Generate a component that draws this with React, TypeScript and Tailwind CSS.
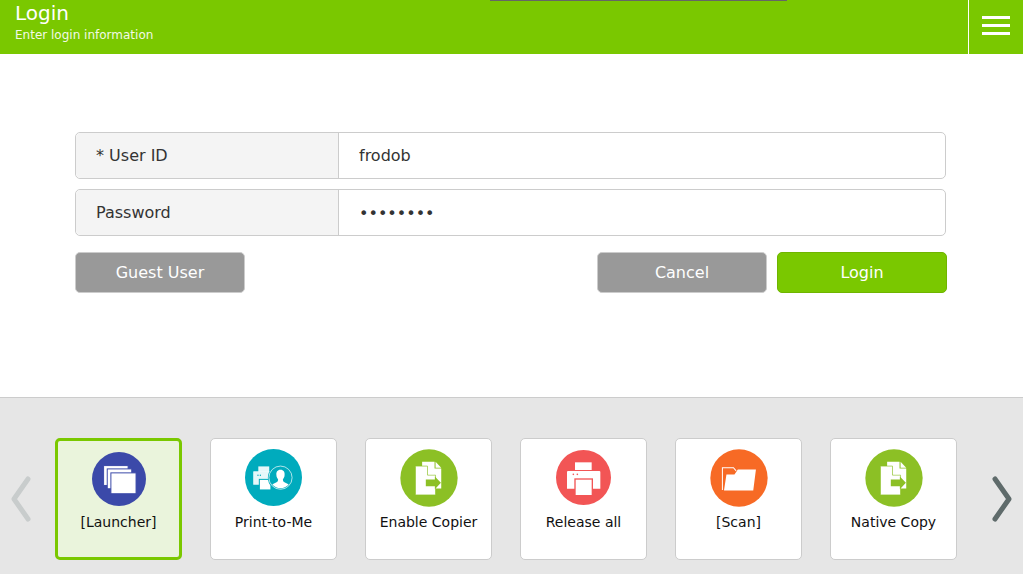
import React from "react";

const Launcher = () => (
  <svg viewBox="19 20 163 163" className="w-[54px] h-[54px]">
    <circle cx="100.5" cy="101.5" r="81.5" fill="#3b49a9" />
    <rect x="54" y="61" width="74" height="60" fill="#fff" stroke="#3b49a9" strokeWidth="3" />
    <rect x="65" y="71" width="74" height="60" fill="#fff" stroke="#3b49a9" strokeWidth="3" />
    <rect x="76" y="83" width="76" height="63" fill="#fff" stroke="#3b49a9" strokeWidth="3" />
  </svg>
);

const PrintToMe = () => (
  <svg viewBox="18 13 167 167" className="w-[57px] h-[57px]">
    <circle cx="101.5" cy="96.5" r="83.5" fill="#00abbd" />
    <rect x="57" y="64" width="32" height="16" fill="#fff" opacity="0.9" />
    <rect x="42" y="78" width="50" height="40" rx="2" fill="#fff" opacity="0.9" />
    <rect x="60" y="102" width="34" height="31" fill="#fff" stroke="#00abbd" strokeWidth="3" />
    <circle cx="56" cy="90" r="2" fill="#00abbd" />
    <circle cx="63" cy="90" r="2" fill="#00abbd" />
    <circle cx="122" cy="97" r="37" fill="#00abbd" />
    <circle cx="122" cy="97" r="34" fill="none" stroke="#fff" strokeWidth="2" />
    <path d="M122 74c-9 0-13 7-12 15 0 6 3 10 5 13 0 5-2 7-6 9-4 2-8 3-11 6 6 7 15 11 24 11s18-4 24-11c-3-3-7-4-11-6-4-2-6-4-6-9 2-3 5-7 5-13 1-8-3-15-12-15z" fill="#fff" />
  </svg>
);

const Copier = () => (
  <svg viewBox="15 12 171 173" className="w-[58px] h-[58px]">
    <circle cx="100.5" cy="98.5" r="85.5" fill="#8cc025" />
    <path d="M80 50h37v20h20v60H80z" fill="#fff" />
    <path d="M120 50l17 18h-17z" fill="#fff" />
    <path d="M60 63h36v27h24v59H60z" fill="#fff" stroke="#8cc025" strokeWidth="2" />
    <path d="M99 66l18 21H99z" fill="#fff" />
    <path d="M91 103h27V94l18 19-18 19v-9H91z" fill="#8cc025" />
  </svg>
);

const Printer = () => (
  <svg viewBox="18 15 165 165" className="w-[55px] h-[55px]">
    <circle cx="100.5" cy="97.5" r="82.5" fill="#f25555" />
    <rect x="75" y="52" width="50" height="23" fill="#fff" />
    <path d="M52 78h96a3 3 0 0 1 3 3v50h-100V81a3 3 0 0 1 3-3z" fill="#fff" />
    <rect x="75" y="102" width="52" height="50" fill="#fff" stroke="#f25555" strokeWidth="4" />
    <circle cx="70" cy="88" r="2.5" fill="#f25555" />
    <circle cx="82" cy="88" r="2.5" fill="#f25555" />
  </svg>
);

const Folder = () => (
  <svg viewBox="15 12 171 173" className="w-[58px] h-[58px]">
    <circle cx="100.5" cy="98.5" r="85.5" fill="#f76a25" />
    <path d="M51 134V68h33l8 9" fill="none" stroke="#fff" strokeWidth="3" />
    <path d="M56 134L63 88h24l10-15h54l-8 63H56z" fill="#fff" />
  </svg>
);

const tiles = [
  { label: "[Launcher]", icon: <Launcher />, active: true, h: "h-[59px] pt-[3px]" },
  { label: "Print-to-Me", icon: <PrintToMe />, active: false, h: "h-[59px]" },
  { label: "Enable Copier", icon: <Copier />, active: false, h: "h-[59px]" },
  { label: "Release all", icon: <Printer />, active: false, h: "h-[59px] pt-[1px]" },
  { label: "[Scan]", icon: <Folder />, active: false, h: "h-[59px]" },
  { label: "Native Copy", icon: <Copier />, active: false, h: "h-[59px]" },
];

export default function App() {
  return (
    <div className="w-[1023px] h-[574px] overflow-hidden flex flex-col bg-white font-['DejaVu_Sans',sans-serif]">
      <header className="relative h-[54px] shrink-0 bg-[#7ac800] flex text-white">
        <div className="absolute left-[490px] top-0 w-[297px] h-[1px] bg-[#666]" />
        <div className="flex-1 pl-[15px] pt-[1px]">
          <div className="text-[20px] leading-[24px]">Login</div>
          <div className="text-[12px] leading-[16px] mt-[2px] opacity-90">Enter login information</div>
        </div>
        <div className="w-[55px] border-l border-white flex flex-col items-center justify-center gap-[5px] pr-[1px] pb-[3px]">
          <span className="block w-[28px] h-[3px] bg-white" />
          <span className="block w-[28px] h-[3px] bg-white" />
          <span className="block w-[28px] h-[3px] bg-white" />
        </div>
      </header>

      <main className="flex-1 pl-[75px] pr-[76px] pt-[78px] text-[16px] text-[#333]">
        <div className="flex flex-col gap-[10px]">
          <div className="h-[47px] flex border border-[#ccc] rounded-[5px] w-[871px]">
            <div className="w-[263px] border-r border-[#ccc] bg-[#f4f4f4] rounded-l-[5px] pl-[20px] flex items-center">* User ID</div>
            <div className="flex-1 pl-[20px] flex items-center">frodob</div>
          </div>
          <div className="h-[47px] flex border border-[#ccc] rounded-[5px] w-[871px]">
            <div className="w-[263px] border-r border-[#ccc] bg-[#f4f4f4] rounded-l-[5px] pl-[20px] flex items-center">Password</div>
            <div className="flex-1 pl-[20px] pt-[2px] flex items-center">••••••••</div>
          </div>
        </div>
        <div className="flex mt-[16px] gap-[10px] text-white">
          <button className="w-[170px] h-[41px] bg-[#999] border border-[#ccc] rounded-[5px]">Guest User</button>
          <button className="w-[170px] h-[41px] bg-[#999] border border-[#ccc] rounded-[5px] ml-auto">Cancel</button>
          <button className="w-[170px] h-[41px] bg-[#7ac800] border border-[#6fb500] rounded-[5px]">Login</button>
        </div>
      </main>

      <footer className="h-[177px] shrink-0 bg-[#e6e6e6] border-t border-[#ccc] flex items-start pt-[40px]">
        <div className="w-[55px] h-[122px] flex items-center justify-center">
          <svg viewBox="0 0 24 48" className="w-[24px] h-[48px] ml-[-13px]">
            <path d="M19 4L5 24l14 20" fill="none" stroke="#c8cccc" strokeWidth="5" strokeLinejoin="round" strokeLinecap="round" />
          </svg>
        </div>
        <div className="flex gap-[28px]">
          {tiles.map((t) => (
            <div
              key={t.label}
              className={
                t.active
                  ? "w-[127px] h-[122px] rounded-[5px] border-[3px] border-[#7ac800] bg-[#eaf4dc] flex flex-col items-center pt-[8px] text-[14px] text-[#111]"
                  : "w-[127px] h-[122px] rounded-[5px] border border-[#ccc] bg-white flex flex-col items-center pt-[10px] text-[14px] text-[#111]"
              }
            >
              <div className={"flex items-start justify-center " + t.h}>{t.icon}</div>
              <div className="leading-[18px] mt-[5px]">{t.label}</div>
            </div>
          ))}
        </div>
        <div className="flex-1 h-[122px] flex items-center justify-center">
          <svg viewBox="0 0 24 48" className="w-[24px] h-[48px] ml-[22px]">
            <path d="M6 4l14 20L6 44" fill="none" stroke="#5f6b6b" strokeWidth="5" strokeLinejoin="round" strokeLinecap="round" />
          </svg>
        </div>
      </footer>
    </div>
  );
}
